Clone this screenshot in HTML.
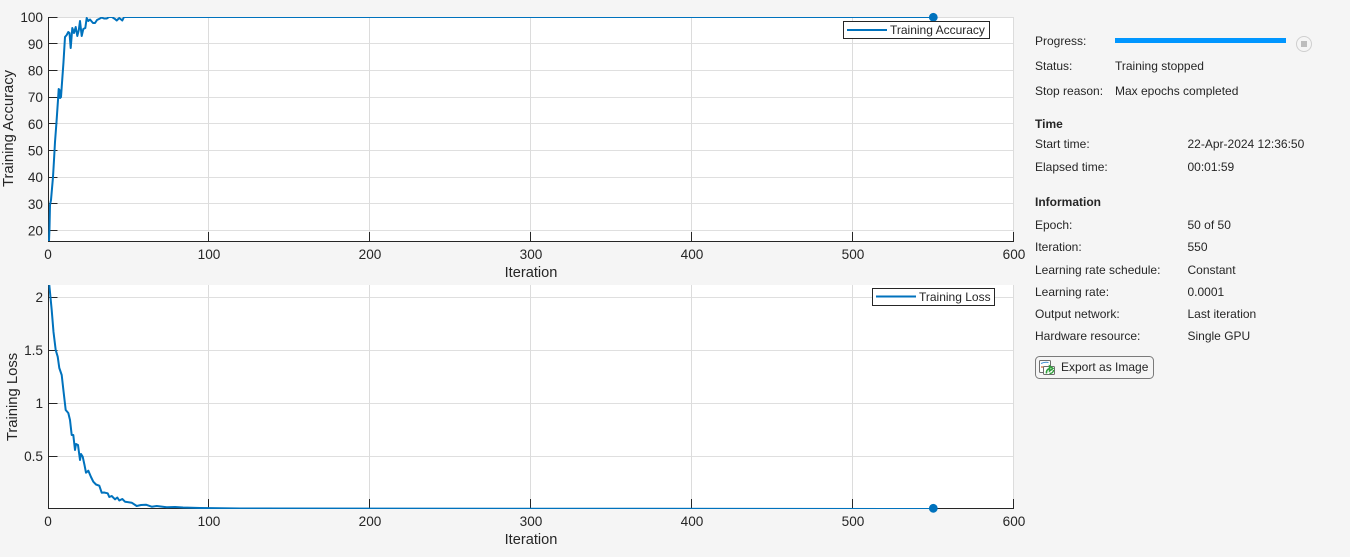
<!DOCTYPE html>
<html lang="en"><head><meta charset="utf-8"><title>Training Progress</title>
<style>
html,body{margin:0;padding:0;background:#f5f5f5;width:1350px;height:557px;overflow:hidden}
svg{display:block}
text{font-family:"Liberation Sans",Arial,sans-serif;fill:#262626}
.t{font-size:13.6px}
.l{font-size:14.6px}
.y{font-size:14.8px}
.s{font-size:12px}
.b{font-size:12px;font-weight:bold}
.g{stroke:#dfdfdf;stroke-width:1;fill:none}
.v{stroke:#dcdcdc;stroke-width:1;fill:none}
.k{stroke:#262626;stroke-width:1;fill:none}
.c{stroke:#0072bd;stroke-width:2;fill:none;stroke-linejoin:round}
</style></head><body>
<svg width="1350" height="557" viewBox="0 0 1350 557" xmlns="http://www.w3.org/2000/svg">
<defs>
<clipPath id="a"><rect x="48" y="17" width="966" height="224.500"/></clipPath>
<clipPath id="b"><rect x="48" y="285" width="966" height="224"/></clipPath>
</defs>
<rect width="1350" height="557" fill="#f5f5f5"/>
<!-- top axes -->
<rect x="48.500" y="17.500" width="965" height="223.500" fill="#fff"/>
<path class="g" d="M48 43.500H1013M48 70.500H1013M48 97.500H1013M48 123.500H1013M48 150.500H1013M48 177.500H1013M48 203.500H1013M48 230.500H1013"/>
<path class="v" d="M208.500 17V241M369.500 17V241M530.500 17V241M691.500 17V241M852.500 17V241M1013.500 17V241M48 17.500H1013.500"/>
<path class="k" d="M48.500 17V241.500H1014M48 17.500H57.500M48 43.500H57.500M48 70.500H57.500M48 97.500H57.500M48 123.500H57.500M48 150.500H57.500M48 177.500H57.500M48 203.500H57.500M48 230.500H57.500M208.500 232V241M369.500 232V241M530.500 232V241M691.500 232V241M852.500 232V241M1013.500 232V241"/>
<path class="c" clip-path="url(#a)" d="M49 241L49.500 228L50 205L51 200L53 177L54 160L55 142L56.500 122L58 100L58.700 89L59.500 90L60 98L61 97L61.700 87L63.500 62L65 37L66.700 35L68.300 32L69.500 33L70.700 48L72.300 28L74 33L75.700 27L77.300 36L78.800 30L80 21L81.700 36L83.300 29L85.300 28L86.700 18L88.300 21L90 19.500L93 23L95 23L97 20L99 19L101.700 17.500L104 18.500L106.700 18.500L109 17L112 17L115 19L116.700 20.500L119.300 18L122.300 20.500L124 17L933 17"/>
<circle cx="933.300" cy="17.300" r="4.400" fill="#0072bd"/>
<rect x="843.500" y="21.500" width="146" height="17" fill="#fff" stroke="#262626"/>
<path d="M847 30H887" stroke="#0072bd" stroke-width="2"/>
<text class="s" x="890" y="34">Training Accuracy</text>
<g class="t" text-anchor="end">
<text x="43" y="22">100</text><text x="43" y="49">90</text><text x="43" y="75.500">80</text><text x="43" y="102">70</text><text x="43" y="129">60</text><text x="43" y="155.500">50</text><text x="43" y="182">40</text><text x="43" y="209">30</text><text x="43" y="235.500">20</text>
</g>
<g class="t" text-anchor="middle">
<text x="48" y="259">0</text><text x="209" y="259">100</text><text x="370" y="259">200</text><text x="531" y="259">300</text><text x="692" y="259">400</text><text x="853" y="259">500</text><text x="1014" y="259">600</text>
</g>
<text class="l" x="531" y="277" text-anchor="middle">Iteration</text>
<text class="y" transform="translate(13 128.500) rotate(-90)" text-anchor="middle">Training Accuracy</text>
<!-- bottom axes -->
<rect x="48.500" y="285" width="965" height="223.500" fill="#fff"/>
<path class="g" d="M48 297.500H1013M48 350.500H1013M48 403.500H1013M48 456.500H1013"/>
<path class="v" d="M208.500 285V508M369.500 285V508M530.500 285V508M691.500 285V508M852.500 285V508M1013.500 285V508"/>
<path class="k" d="M48.500 285V508.500H1014M48 297.500H57.500M48 350.500H57.500M48 403.500H57.500M48 456.500H57.500M208.500 499V508M369.500 499V508M530.500 499V508M691.500 499V508M852.500 499V508M1013.500 499V508"/>
<path class="c" clip-path="url(#b)" d="M49.300 285L51.700 310L53.500 332L55.700 350L57.700 356.700L59.300 368L61.700 375L63.500 391L65.700 410L68.300 413L70 420L71.700 435L73.300 435L75 450L76 444L78 445L80 460L81 454L82.700 456.700L84.500 465L86 472.700L88.300 470.700L91 477L93.300 481.700L96 484.500L99.300 485.700L101.700 492.700L104 492.500L107.700 493.300L109.300 497L111.700 496L115 499.300L117.300 497.500L119.300 500.500L122.300 499L125 501.700L131.700 502.700L136.700 506L141 505L146 504.700L151.700 506.700L156.700 506L166.700 507.300L175 507L183 507.500L200 508L240 508.500L933 509"/>
<circle cx="933.300" cy="508.300" r="4.400" fill="#0072bd"/>
<rect x="872.500" y="288.500" width="122" height="17" fill="#fff" stroke="#262626"/>
<path d="M876 296.500H916" stroke="#0072bd" stroke-width="2"/>
<text class="s" x="919" y="301">Training Loss</text>
<g class="t" text-anchor="end">
<text x="43" y="302">2</text><text x="43" y="355">1.5</text><text x="43" y="408">1</text><text x="43" y="461">0.5</text>
</g>
<g class="t" text-anchor="middle">
<text x="48" y="526">0</text><text x="209" y="526">100</text><text x="370" y="526">200</text><text x="531" y="526">300</text><text x="692" y="526">400</text><text x="853" y="526">500</text><text x="1014" y="526">600</text>
</g>
<text class="l" x="531" y="544" text-anchor="middle">Iteration</text>
<text class="y" transform="translate(17 397) rotate(-90)" text-anchor="middle">Training Loss</text>
<!-- side panel -->
<text class="s" x="1035" y="45">Progress:</text>
<rect x="1115" y="38" width="171" height="5" fill="#0096ff"/>
<circle cx="1304" cy="44" r="7.500" fill="#f5f5f5" stroke="#cfcfcf" stroke-width="1"/>
<rect x="1301" y="41" width="6" height="6" fill="#bdbdbd"/>
<text class="s" x="1035" y="70">Status:</text><text class="s" x="1115" y="70">Training stopped</text>
<text class="s" x="1035" y="95">Stop reason:</text><text class="s" x="1115" y="95">Max epochs completed</text>
<text class="b" x="1035" y="128">Time</text>
<text class="s" x="1035" y="148">Start time:</text><text class="s" x="1187.500" y="148">22-Apr-2024 12:36:50</text>
<text class="s" x="1035" y="171">Elapsed time:</text><text class="s" x="1187.500" y="171">00:01:59</text>
<text class="b" x="1035" y="206">Information</text>
<text class="s" x="1035" y="229">Epoch:</text><text class="s" x="1187.500" y="229">50 of 50</text>
<text class="s" x="1035" y="251">Iteration:</text><text class="s" x="1187.500" y="251">550</text>
<text class="s" x="1035" y="274">Learning rate schedule:</text><text class="s" x="1187.500" y="274">Constant</text>
<text class="s" x="1035" y="296">Learning rate:</text><text class="s" x="1187.500" y="296">0.0001</text>
<text class="s" x="1035" y="318">Output network:</text><text class="s" x="1187.500" y="318">Last iteration</text>
<text class="s" x="1035" y="340">Hardware resource:</text><text class="s" x="1187.500" y="340">Single GPU</text>
<rect x="1035.500" y="356.500" width="118" height="22" rx="4" fill="#f5f5f5" stroke="#7a7a7a"/>
<rect x="1039.500" y="360.500" width="11" height="12" rx="1" fill="#fff" stroke="#6e6e6e"/>
<path d="M1041 363.500C1043 362.500 1046 362 1048.500 362.500" stroke="#3f8fd2" stroke-width="1" fill="none"/>
<path d="M1041 367H1044" stroke="#d9825b" stroke-width="1.500"/>
<rect x="1043.500" y="366.500" width="11" height="8" rx="1" fill="#fff" stroke="#6e6e6e"/>
<path d="M1046.500 373.500C1046 370.500 1048 368.500 1050.500 368.500M1049.500 366L1053 368.500L1049.500 371ZM1053.500 370C1053.500 372 1052 373.500 1049.500 373.500" stroke="#2f9e3a" stroke-width="1.500" fill="none"/>
<text class="s" x="1061" y="371">Export as Image</text>
</svg>
</body></html>
